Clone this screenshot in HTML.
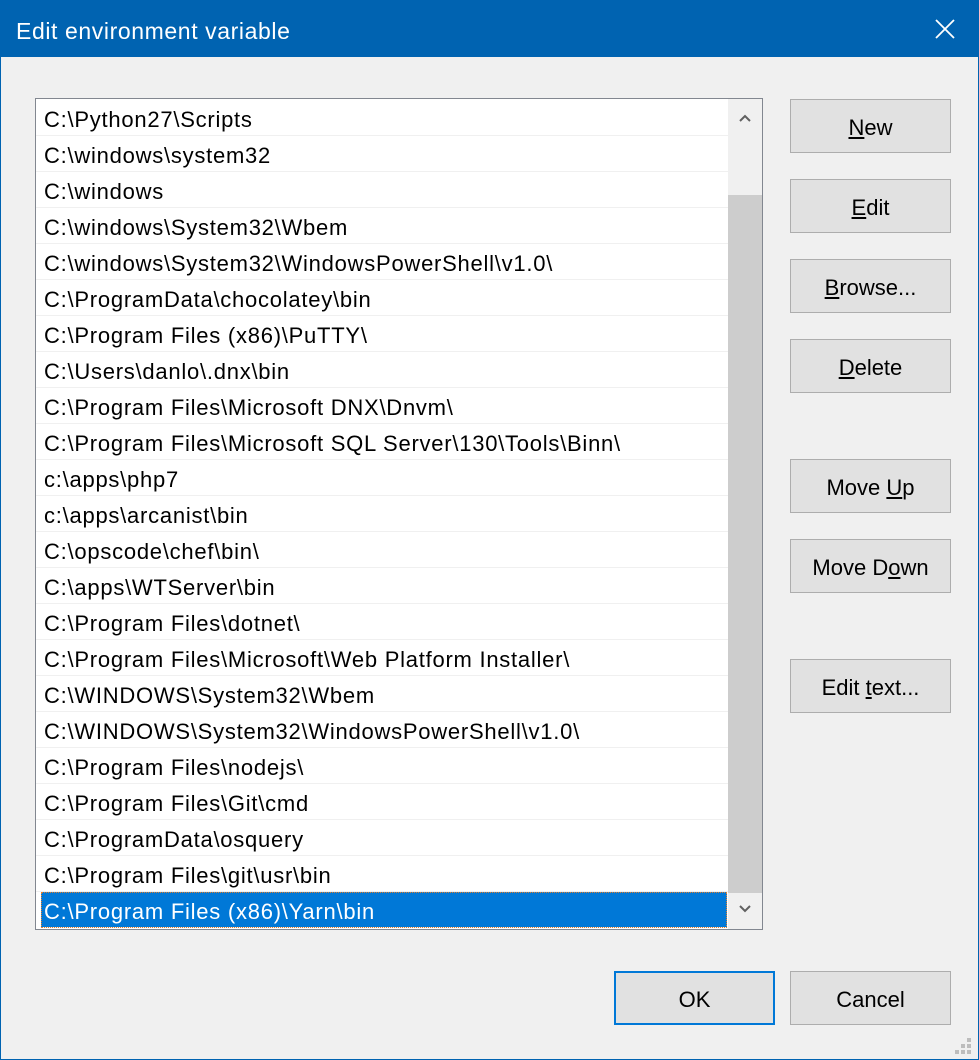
<!DOCTYPE html>
<html><head><meta charset="utf-8"><style>
*{margin:0;padding:0;box-sizing:border-box}
body{width:979px;height:1060px;background:#f0f0f0;font-family:"Liberation Sans",sans-serif;position:relative;overflow:hidden}
.frame{position:absolute;left:0;top:0;width:979px;height:1060px;border:1px solid #0063b1;pointer-events:none}
.title{position:absolute;left:0;top:0;width:979px;height:57px;background:#0063b1;color:#fff;font-size:23px;line-height:62px;padding-left:16px;letter-spacing:0.6px}
.x{position:absolute;right:24px;top:19px}
.list{position:absolute;left:35px;top:98px;width:728px;height:832px;background:#fff;border:1px solid #828790}
.row{position:absolute;left:0;width:692px;height:36px;border-bottom:1px solid #f0f0f0;font-size:22px;letter-spacing:0.75px;line-height:40px;padding-left:8px;color:#000;white-space:nowrap}
.sel{background:#0078d7;color:#fff;left:5px;width:686px;padding-left:3px;outline:1px dotted #e08030;outline-offset:-1px}
.sb{position:absolute;left:692px;top:0;width:34px;height:830px;background:#f0f0f0}
.thumb{position:absolute;left:0;top:96px;width:34px;height:698px;background:#cdcdcd}
.btn{position:absolute;left:790px;width:161px;height:54px;background:#e1e1e1;border:1px solid #adadad;font-size:22px;text-align:center;line-height:56px;color:#000}
.ok{left:614px;border:2px solid #0078d7;line-height:54px}
u{text-decoration:underline}
</style></head><body>
<div class="title">Edit environment variable
<svg class="x" width="20" height="20" viewBox="0 0 20 20"><path d="M1 1L19 19M19 1L1 19" stroke="#fff" stroke-width="1.8"/></svg></div>
<div class="list">
<div class="row" style="top:1px">C:\Python27\Scripts</div>
<div class="row" style="top:37px">C:\windows\system32</div>
<div class="row" style="top:73px">C:\windows</div>
<div class="row" style="top:109px">C:\windows\System32\Wbem</div>
<div class="row" style="top:145px">C:\windows\System32\WindowsPowerShell\v1.0\</div>
<div class="row" style="top:181px">C:\ProgramData\chocolatey\bin</div>
<div class="row" style="top:217px">C:\Program Files (x86)\PuTTY\</div>
<div class="row" style="top:253px">C:\Users\danlo\.dnx\bin</div>
<div class="row" style="top:289px">C:\Program Files\Microsoft DNX\Dnvm\</div>
<div class="row" style="top:325px">C:\Program Files\Microsoft SQL Server\130\Tools\Binn\</div>
<div class="row" style="top:361px">c:\apps\php7</div>
<div class="row" style="top:397px">c:\apps\arcanist\bin</div>
<div class="row" style="top:433px">C:\opscode\chef\bin\</div>
<div class="row" style="top:469px">C:\apps\WTServer\bin</div>
<div class="row" style="top:505px">C:\Program Files\dotnet\</div>
<div class="row" style="top:541px">C:\Program Files\Microsoft\Web Platform Installer\</div>
<div class="row" style="top:577px">C:\WINDOWS\System32\Wbem</div>
<div class="row" style="top:613px">C:\WINDOWS\System32\WindowsPowerShell\v1.0\</div>
<div class="row" style="top:649px">C:\Program Files\nodejs\</div>
<div class="row" style="top:685px">C:\Program Files\Git\cmd</div>
<div class="row" style="top:721px">C:\ProgramData\osquery</div>
<div class="row" style="top:757px">C:\Program Files\git\usr\bin</div>
<div class="row sel" style="top:793px">C:\Program Files (x86)\Yarn\bin</div>
<div class="sb"><div class="thumb"></div>
<svg style="position:absolute;left:11px;top:15px" width="12" height="8"><path d="M1 7L6 2L11 7" stroke="#606060" stroke-width="2" fill="none"/></svg>
<svg style="position:absolute;left:11px;top:806px" width="12" height="8"><path d="M1 1L6 6L11 1" stroke="#606060" stroke-width="2" fill="none"/></svg>
</div></div>
<div class="btn" style="top:99px"><u>N</u>ew</div>
<div class="btn" style="top:179px"><u>E</u>dit</div>
<div class="btn" style="top:259px"><u>B</u>rowse...</div>
<div class="btn" style="top:339px"><u>D</u>elete</div>
<div class="btn" style="top:459px">Move <u>U</u>p</div>
<div class="btn" style="top:539px">Move D<u>o</u>wn</div>
<div class="btn" style="top:659px">Edit <u>t</u>ext...</div>
<div class="btn ok" style="top:971px">OK</div>
<div class="btn" style="top:971px">Cancel</div>
<svg style="position:absolute;left:955px;top:1038px" width="18" height="18"><g fill="#bdbdbd"><rect x="12" y="0" width="4" height="4"/><rect x="6" y="6" width="4" height="4"/><rect x="12" y="6" width="4" height="4"/><rect x="0" y="12" width="4" height="4"/><rect x="6" y="12" width="4" height="4"/><rect x="12" y="12" width="4" height="4"/></g></svg>
<div class="frame"></div>
</body></html>
